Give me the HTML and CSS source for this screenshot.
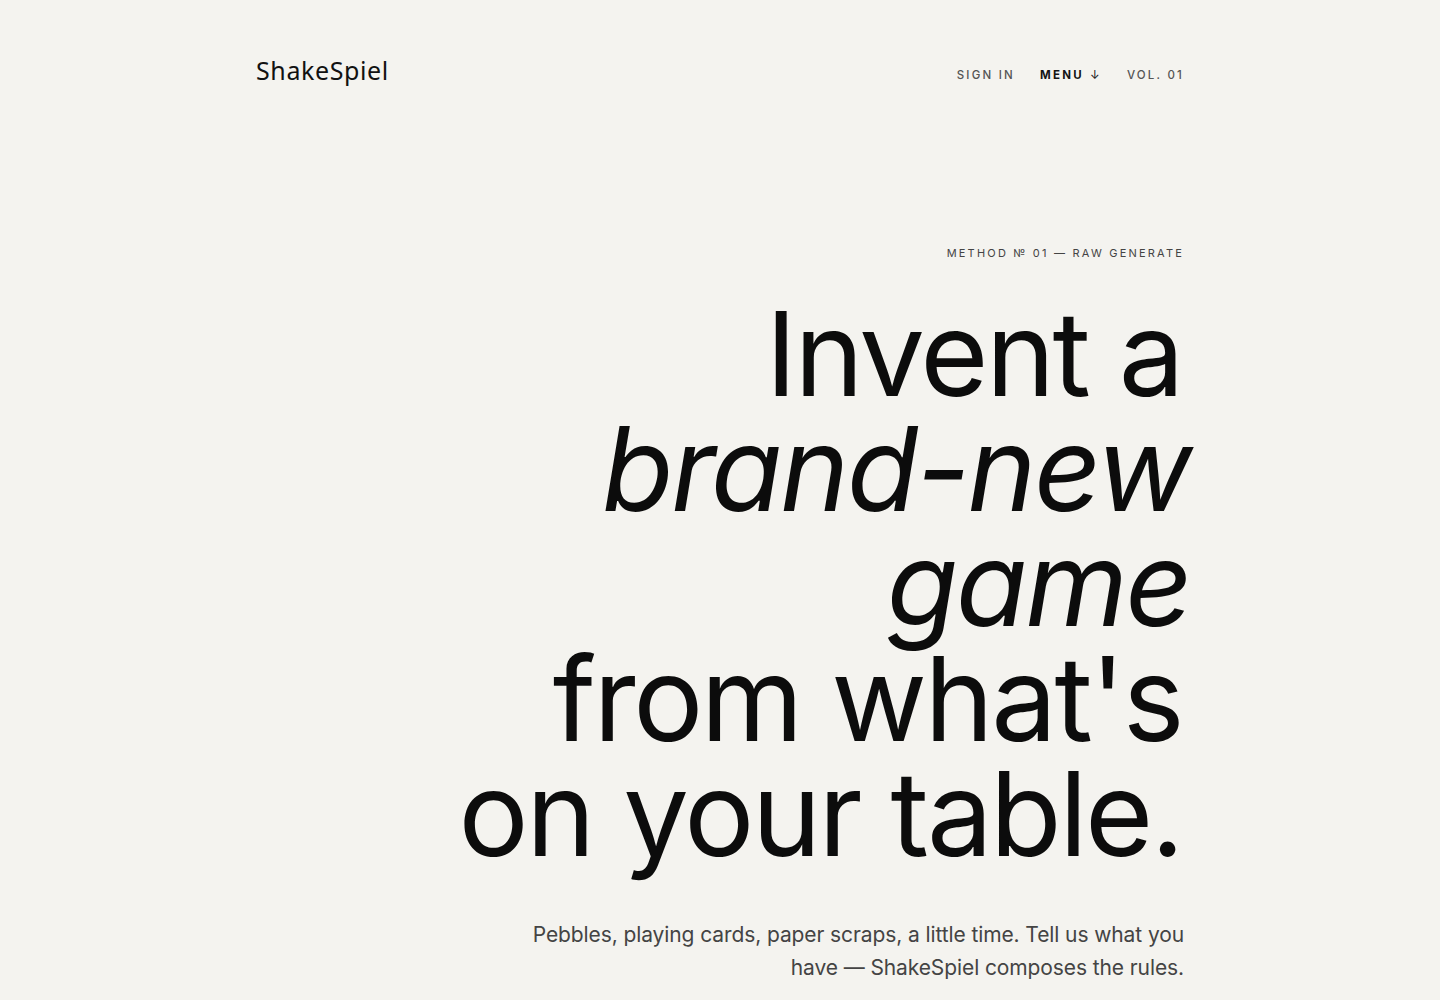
FILE: index.html
```html
<!DOCTYPE html>
<html lang="en">
<head>
<meta charset="utf-8">
<title>ShakeSpiel</title>
<link rel="stylesheet" href="styles.css">
</head>
<body>
<div class="page">
  <header class="header">
    <div class="logo">ShakeSpiel</div>
    <nav class="nav">
      <a class="nav-link">SIGN IN</a>
      <a class="nav-link nav-strong">MENU <span class="arrow">↓</span></a>
      <a class="nav-link">VOL. 01</a>
    </nav>
  </header>
  <main class="hero">
    <div class="eyebrow">METHOD № 01 — RAW GENERATE</div>
    <h1 class="headline">
      <span class="line">Invent a</span>
      <span class="line it">brand-new</span>
      <span class="line it">game</span>
      <span class="line">from what's</span>
      <span class="line">on your table.</span>
    </h1>
    <p class="lede">Pebbles, playing cards, paper scraps, a little time. Tell us what you have — ShakeSpiel composes the rules.</p>
  </main>
</div>
</body>
</html>
```
FILE: styles.css
```css
* { box-sizing: border-box; }
html, body { margin: 0; padding: 0; }
body {
  background: #f4f3ef;
  color: #0f0f0f;
  font-family: Inter, "Liberation Sans", sans-serif;
  height: 1000px;
  overflow: hidden;
}
.page {
  width: 928px;
  margin: 0 auto;
}
.header {
  display: flex;
  justify-content: space-between;
  align-items: center;
  padding-top: 54px;
  height: 86px;
}
.logo {
  font-family: "Noto Sans", Inter, sans-serif;
  font-size: 25px;
  letter-spacing: 0.6px;
  color: #111;
  line-height: 32px;
}
.nav {
  display: flex;
  gap: 25px;
  padding-top: 9px;
}
.nav-link {
  font-size: 11.5px;
  letter-spacing: 2.2px;
  color: #555;
  font-weight: 500;
}
.nav-strong {
  color: #151515;
  font-weight: 700;
  letter-spacing: 2.3px;
}
.arrow { font-weight: 400; margin-left: 1px; }
.hero {
  display: flex;
  flex-direction: column;
  align-items: flex-end;
  text-align: right;
  padding-top: 159px;
}
.eyebrow {
  font-size: 11px;
  letter-spacing: 2.2px;
  color: #444;
  line-height: 16px;
}
.headline {
  margin: 35px 0 0;
  font-weight: 400;
  font-size: 117px;
  line-height: 115px;
  letter-spacing: -2.5px;
  display: flex;
  flex-direction: column;
  align-items: flex-end;
  color: #0c0c0c;
}
.line { display: block; white-space: nowrap; margin-right: 2px; }
.it { font-style: italic; margin-right: -6px; }
.lede {
  margin: 47px 0 0;
  max-width: 660px;
  font-size: 21px;
  line-height: 33px;
  color: #444;
  letter-spacing: -0.1px;
}
```
